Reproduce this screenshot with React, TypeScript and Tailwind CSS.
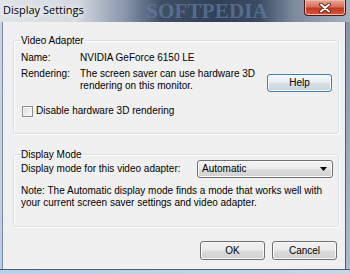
import type { ReactNode } from 'react';

const ui = "font-['Liberation_Sans',Arial,sans-serif]";

// Vista-style push button
function PushButton({ label, focused, className }: { label: string; focused?: boolean; className?: string }) {
  return (
    <button
      type="button"
      className={`w-[65px] shrink-0 rounded-[3px] border text-[10px] leading-none text-black shadow-[inset_0_0_0_1px_#fbfbfb] ${
        focused
          ? 'border-[#3c7fb1] bg-[linear-gradient(#f3f7fa_0%,#e6edf2_48%,#d6dfe6_52%,#c9d3db_100%)]'
          : 'border-[#707070] bg-[linear-gradient(#f2f2f2_0%,#ebebeb_48%,#dddddd_52%,#cfcfcf_100%)]'
      } ${className ?? ''}`}
    >
      {label}
    </button>
  );
}

function GroupBox({ title, children, className }: { title: string; children: ReactNode; className?: string }) {
  return (
    <fieldset
      className={`rounded-[3px] border border-[#d5dfe5] pl-[7px] pr-[6px] shadow-[inset_1px_1px_0_#fff,1px_1px_0_#fff] ${className ?? ''}`}
    >
      <legend className="-ml-[1px] px-[1px] text-[10px] leading-[13px]">{title}</legend>
      {children}
    </fieldset>
  );
}

export default function App() {
  return (
    <div className={`flex h-[274px] w-[350px] flex-col overflow-hidden ${ui} text-black`}>
      {/* title bar */}
      <div className="relative flex h-[22px] shrink-0 items-start justify-between bg-[linear-gradient(90deg,#dfe4ea_0%,#d2d9e0_22%,#8795aa_36%,#3e4f66_46%,#2f4057_62%,#3b4c62_74%,#7d8ba0_84%,#a4b0bf_100%)]">
        <span className="pointer-events-none absolute left-[146px] top-[1px] font-['Liberation_Serif',serif] text-[21px] font-bold leading-[21px] tracking-[0.2px] text-[#6c86ad]/60">
          SOFTPEDIA
        </span>
        <span className="relative ml-[3px] mt-[3px] font-['Open_Sans',sans-serif] text-[11px] leading-[14px] [text-shadow:0_0_6px_#fff,0_0_10px_#fff]">
          Display Settings
        </span>
        <button
          type="button"
          className="relative mr-[4px] flex h-[16px] w-[42px] items-center justify-center rounded-b-[4px] border border-t-0 border-[#4a1a12] bg-[linear-gradient(#e8a696_0%,#d8705c_45%,#c13a22_55%,#d4563c_100%)] shadow-[inset_0_0_0_1px_#f0b8a8]"
        >
          <svg width="12" height="10" viewBox="0 0 12 10">
            <path d="M2 1.5 L10 8.5 M10 1.5 L2 8.5" stroke="#3a0f08" strokeWidth="3.6" strokeLinecap="round" />
            <path d="M2 1.5 L10 8.5 M10 1.5 L2 8.5" stroke="#fff" strokeWidth="2" strokeLinecap="round" />
          </svg>
        </button>
      </div>

      <div className="flex min-h-0 flex-1">
        <div className="w-[3px] shrink-0 border-r border-[#7d8a98] bg-[linear-gradient(#c6d4e2,#b6d0ea)]" />

        {/* client area */}
        <div className="flex flex-1 flex-col bg-[#f0f0f0] pb-[9px] pl-[10px] pr-[6px] pt-[12px]">
          <GroupBox title="Video Adapter" className="pb-[16px]">
            <div className="mt-[5px] flex text-[10px] leading-[12px]">
              <span className="w-[59px] shrink-0">Name:</span>
              <span>NVIDIA GeForce 6150 LE</span>
            </div>
            <div className="mt-[4px] flex items-start text-[10px] leading-[12px]">
              <span className="w-[59px] shrink-0">Rendering:</span>
              <span className="flex-1">
                The screen saver can use hardware 3D
                <br />
                rendering on this monitor.
              </span>
              <PushButton label="Help" focused className="mt-[6px] h-[18px]" />
            </div>
            <label className="mt-[13px] flex items-center gap-[3px] text-[10px] leading-[12px]">
              <span className="ml-[1px] h-[11px] w-[11px] shrink-0 border border-[#8f8f8f] bg-[linear-gradient(135deg,#dcdcdc,#fbfbfb)] shadow-[inset_0_0_0_1px_#f4f4f4]" />
              Disable hardware 3D rendering
            </label>
          </GroupBox>

          <GroupBox title="Display Mode" className="mt-[14px] pb-[17px]">
            <div className="-mt-[1px] flex items-center justify-between text-[10px] leading-[12px]">
              <span>Display mode for this video adapter:</span>
              <div className="-mr-[1px] flex h-[18px] w-[136px] items-center justify-between rounded-[3px] border border-[#707070] bg-[linear-gradient(#f2f2f2_0%,#ebebeb_48%,#dddddd_52%,#cfcfcf_100%)] pl-[4px] pr-[5px] shadow-[inset_0_0_0_1px_#fbfbfb]">
                <span>Automatic</span>
                <svg width="7" height="4" viewBox="0 0 7 4">
                  <path d="M0 0 H7 L3.5 4 Z" fill="#000" />
                </svg>
              </div>
            </div>
            <p className="mt-[7px] text-[10px] leading-[12px]">
              Note: The Automatic display mode finds a mode that works well with
              <br />
              your current screen saver settings and video adapter.
            </p>
          </GroupBox>

          <div className="mr-[2px] mt-auto flex justify-end gap-[7px]">
            <PushButton label="OK" className="h-[19px]" />
            <PushButton label="Cancel" className="h-[19px]" />
          </div>
        </div>

        <div className="w-[5px] shrink-0 border-l border-[#4f5b68] bg-[linear-gradient(#8796aa,#a9bccf)]" />
      </div>

      <div className="h-[5px] shrink-0 border-t border-[#4f5b68] bg-[linear-gradient(90deg,#b6d0ea,#c5d6e6)]" />
    </div>
  );
}
